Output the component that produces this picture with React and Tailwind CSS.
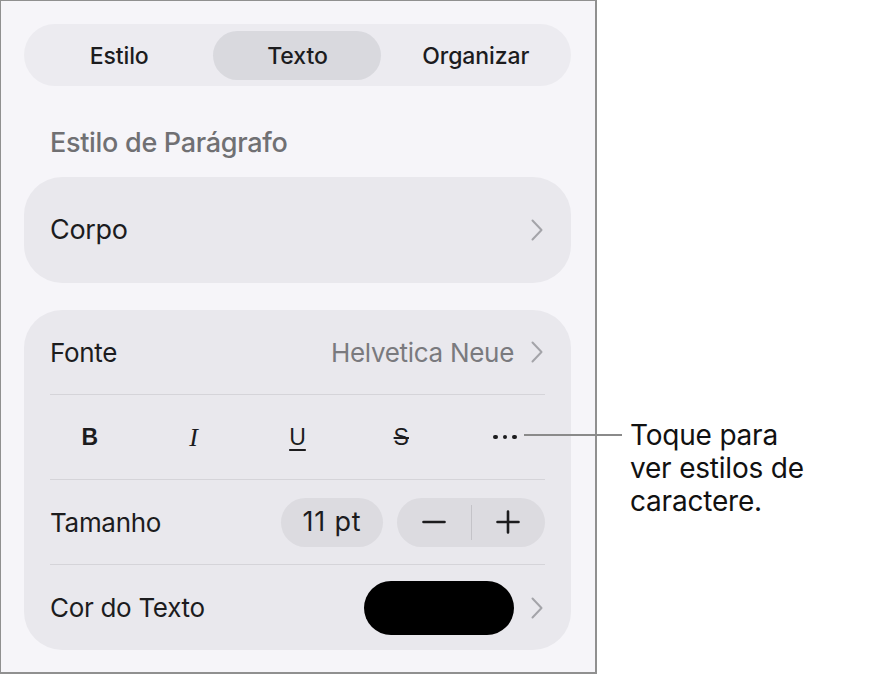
import { useState } from 'react';

const Chevron = ({ className = '' }) => (
  <svg width="14" height="24" viewBox="0 0 14 24" className={className}>
    <path d="M2.5 2.5 L11.5 12 L2.5 21.5" fill="none" stroke="#a4a4a9" strokeWidth="2" strokeLinecap="round" strokeLinejoin="round" />
  </svg>
);

const tabs = ['Estilo', 'Texto', 'Organizar'];

export default function App() {
  const [tab, setTab] = useState('Texto');
  const [size, setSize] = useState(11);

  return (
    <div className="relative flex h-[676px] w-[878px] bg-white font-['Inter',sans-serif] text-[#1c1c1e]">
      <div className="flex h-[674px] w-[597px] flex-col border border-r-2 border-b-2 border-[#909090] bg-[#f6f5f9] pl-[23px] pr-[24px] pt-[23px]">
        {/* segmented control */}
        <div className="grid h-[62px] grid-cols-3 items-center rounded-full bg-[#ecebf0] px-[6px]">
          {tabs.map((name) => (
            <button
              key={name}
              type="button"
              onClick={() => setTab(name)}
              className={`mx-auto flex h-[49px] w-[168px] items-center justify-center rounded-full pt-[2px] text-[23px] font-medium tracking-[-0.1px] ${
                tab === name ? 'bg-[#d9d9de]' : ''
              }`}
            >
              {name}
            </button>
          ))}
        </div>

        <div className="mt-[40px] px-[26px] text-[27px] font-medium leading-[34px] tracking-[-0.3px] text-[#707073]">
          Estilo de Parágrafo
        </div>

        <div className="mt-[17px] flex h-[106px] items-center justify-between rounded-[38px] bg-[#e9e8ed] pl-[26px] pr-[27px]">
          <span className="text-[27px] tracking-[-0.3px]">Corpo</span>
          <Chevron />
        </div>

        <div className="mt-[27px] flex flex-col rounded-[38px] bg-[#e9e8ed]">
          <div className="flex h-[84px] items-center justify-between pl-[26px] pr-[27px]">
            <span className="text-[26px] tracking-[-0.3px]">Fonte</span>
            <div className="flex items-center gap-[16px]">
              <span className="text-[26px] tracking-[-0.3px] text-[#7a7a7e]">Helvetica Neue</span>
              <Chevron />
            </div>
          </div>
          <div className="mx-[26px] h-px bg-[#d5d4d9]" />

          <div className="grid h-[84px] grid-cols-5 items-center px-[14px]">
            <span className="text-center font-['Liberation_Sans',sans-serif] text-[23px] font-bold">B</span>
            <span className="text-center font-['Liberation_Serif',serif] text-[26px] italic">I</span>
            <span className="text-center font-['Liberation_Sans',sans-serif] text-[23px] underline decoration-[1.5px] underline-offset-[4px]">U</span>
            <span className="text-center font-['Liberation_Sans',sans-serif] text-[23px] line-through decoration-[1.5px]">S</span>
            <div className="flex items-center justify-center gap-[5px]">
              <span className="h-[4.5px] w-[4.5px] rounded-full bg-[#1c1c1e]" />
              <span className="h-[4.5px] w-[4.5px] rounded-full bg-[#1c1c1e]" />
              <span className="h-[4.5px] w-[4.5px] rounded-full bg-[#1c1c1e]" />
            </div>
          </div>
          <div className="mx-[26px] h-px bg-[#d5d4d9]" />

          <div className="flex h-[84px] items-center justify-between pl-[26px] pr-[26px]">
            <span className="text-[26px] tracking-[-0.3px]">Tamanho</span>
            <div className="flex items-center gap-[14px]">
              <div className="flex h-[49px] w-[102px] items-center justify-center rounded-full bg-[#dcdbe0] text-[27px] tracking-[0.8px]">
                {size} pt
              </div>
              <div className="flex h-[49px] w-[148px] items-center rounded-full bg-[#dcdbe0]">
                <button type="button" onClick={() => setSize((s) => s - 1)} className="flex h-full flex-1 items-center justify-center">
                  <svg width="24" height="24" viewBox="0 0 24 24">
                    <path d="M1.5 12 H22.5" stroke="#1c1c1e" strokeWidth="2.6" strokeLinecap="round" />
                  </svg>
                </button>
                <div className="h-[35px] w-px bg-[#c4c3c8]" />
                <button type="button" onClick={() => setSize((s) => s + 1)} className="flex h-full flex-1 items-center justify-center">
                  <svg width="24" height="24" viewBox="0 0 24 24">
                    <path d="M1.5 12 H22.5 M12 1.5 V22.5" stroke="#1c1c1e" strokeWidth="2.6" strokeLinecap="round" />
                  </svg>
                </button>
              </div>
            </div>
          </div>
          <div className="mx-[26px] h-px bg-[#d5d4d9]" />

          <div className="flex h-[85px] items-center justify-between pl-[26px] pr-[27px]">
            <span className="text-[26px] tracking-[-0.3px]">Cor do Texto</span>
            <div className="flex items-center gap-[16px]">
              <div className="h-[54px] w-[150px] rounded-full bg-black" />
              <Chevron />
            </div>
          </div>
        </div>
      </div>

      {/* callout */}
      <div className="absolute left-[524px] top-[434px] h-[2px] w-[98px] bg-[#8a8a8a]" />
      <div className="absolute left-[630px] top-[419px] text-[28px] leading-[33px] tracking-[-0.2px] text-[#111]">
        Toque para
        <br />
        ver estilos de
        <br />
        caractere.
      </div>
    </div>
  );
}
